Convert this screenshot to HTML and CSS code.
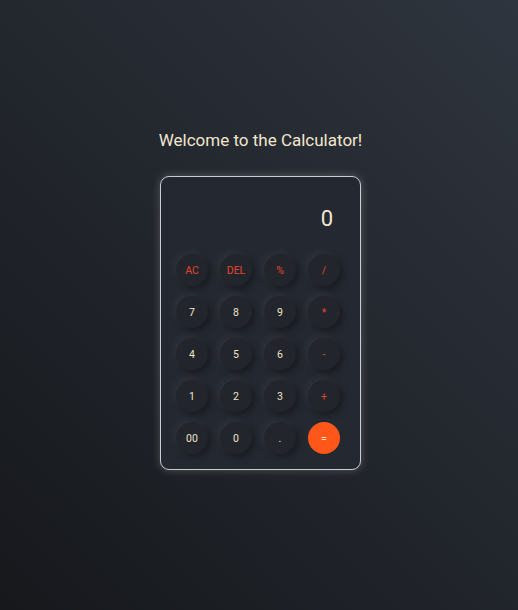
FILE: index.html
```html
<!DOCTYPE html>
<html lang="en">
<head>
<meta charset="utf-8">
<title>Calculator</title>
<link rel="stylesheet" href="styles.css">
</head>
<body>
<main class="page">
  <h1 class="title">Welcome to the Calculator!</h1>
  <div class="calc">
    <div class="display">0</div>
    <div class="keys">
      <button class="key op">AC</button>
      <button class="key op">DEL</button>
      <button class="key op">%</button>
      <button class="key op">/</button>
      <button class="key">7</button>
      <button class="key">8</button>
      <button class="key">9</button>
      <button class="key op">*</button>
      <button class="key">4</button>
      <button class="key">5</button>
      <button class="key">6</button>
      <button class="key op">-</button>
      <button class="key">1</button>
      <button class="key">2</button>
      <button class="key">3</button>
      <button class="key op">+</button>
      <button class="key">00</button>
      <button class="key">0</button>
      <button class="key">.</button>
      <button class="key equal">=</button>
    </div>
  </div>
</main>
</body>
</html>
```
FILE: styles.css
```css
* { box-sizing: border-box; }
html, body { margin: 0; padding: 0; }
body {
  min-height: 100vh;
  background: linear-gradient(45deg, #16181c 0%, #22262d 50%, #2f353e 100%);
  font-family: Roboto, "Noto Sans", sans-serif;
}
.page {
  min-height: 100vh;
  display: flex;
  flex-direction: column;
  align-items: center;
  justify-content: center;
  padding: 0 0 10px 3px;
}
.title {
  margin: 0 0 26px;
  font-size: 17px;
  line-height: 20px;
  font-weight: 400;
  color: #f3e6cf;
}
.calc {
  width: 201px;
  height: 294px;
  border: 1px solid #c9ccd0;
  border-radius: 9px;
  background: #242830;
  box-shadow: 0 0 9px rgba(255, 255, 255, 0.24);
  padding: 27px 19px 16px 15px;
  display: flex;
  flex-direction: column;
}
.display {
  text-align: right;
  font-size: 22px;
  line-height: 30px;
  color: #f3e6cf;
  padding-right: 8px;
  margin-bottom: 20px;
}
.keys {
  display: grid;
  grid-template-columns: repeat(4, 32px);
  grid-auto-rows: 32px;
  column-gap: 12px;
  row-gap: 10px;
}
.key {
  width: 32px;
  height: 32px;
  border: none;
  border-radius: 50%;
  background: #22262c;
  color: #efe3cb;
  font-family: Roboto, "Noto Sans", sans-serif;
  font-size: 10.5px;
  padding: 0;
  box-shadow: -3px -3px 7px rgba(255, 255, 255, 0.05), 3px 3px 7px rgba(0, 0, 0, 0.35);
}
.op { color: #e2452c; }
.equal {
  background: #ff5719;
  color: #f6e7cf;
  box-shadow: none;
}
```
